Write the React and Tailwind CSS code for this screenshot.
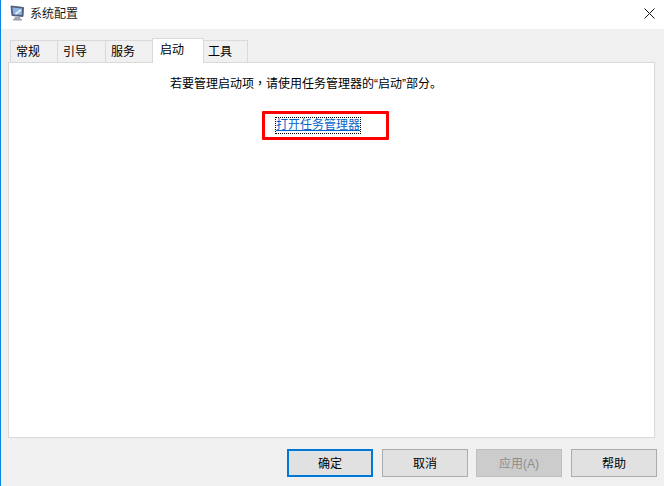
const font = { fontFamily: '"Liberation Sans", "Noto Sans CJK SC", sans-serif' };

function AppIcon() {
  return (
    <svg width="16" height="16" viewBox="0 0 16 16" className="shrink-0">
      <path d="M1 1 L13.5 2.5 L13 11.5 L2 10.5 Z" fill="#59637f" stroke="#3d4a6b" strokeWidth="0.8" />
      <path d="M2.5 2.5 L12 3.6 L11.7 10 L3.2 9.3 Z" fill="#8db4e8" />
      <path d="M4.5 9 L10 4.2 L11.5 5.5 L6.5 9.4 Z" fill="#e8f1fb" />
      <path d="M5 11.5 L10 12 L11 14.5 L4 14.2 Z" fill="#a4a8b0" />
      <path d="M3 14.8 L12 15" stroke="#777c88" strokeWidth="1.1" />
    </svg>
  );
}

function Tab({ label, active, width }) {
  if (active) {
    return (
      <div className={`${width} h-[25px] -mx-px relative z-10 -mb-px bg-white border border-b-0 border-[#d9d9d9] pl-[7px] pt-[2px] text-[12px] leading-[18px] text-black`}>
        {label}
      </div>
    );
  }
  return (
    <div className={`${width} h-[22px] bg-[#f0f0f0] border border-b-0 border-l-0 first:border-l border-[#d9d9d9] pl-[5px] pt-[2px] text-[12px] leading-[18px] text-black`}>
      {label}
    </div>
  );
}

function Button({ label, variant }) {
  const styles = {
    primary: "border-2 border-[#0078d7] bg-[#e1e1e1] text-black",
    normal: "border border-[#adadad] bg-[#e1e1e1] text-black",
    disabled: "border border-[#bfbfbf] bg-[#cccccc] text-[#8c8c8c]",
  };
  return (
    <div className={`w-[86px] h-[28px] flex items-center justify-center pt-[1px] text-[12px] ${styles[variant]}`}>
      {label}
    </div>
  );
}

export default function App() {
  return (
    <div style={font} className="w-[664px] h-[486px] overflow-hidden flex flex-col bg-[#f0f0f0] border-l border-[#0a84e3]">
      <div className="h-[29px] shrink-0 bg-white flex items-center pl-[9px] pr-[9px] pb-[3px]">
        <AppIcon />
        <span className="ml-[4px] pt-[1px] text-[12px] text-[#1a1a1a]">系统配置</span>
        <svg width="11" height="11" viewBox="0 0 11 11" className="ml-auto">
          <path d="M0.5 0.5 L10.5 10.5 M10.5 0.5 L0.5 10.5" stroke="#111" strokeWidth="1" fill="none" />
        </svg>
      </div>

      <div className="flex-1 flex flex-col pl-[7px] pr-[9px] pt-[9px]">
        <div className="h-[24px] shrink-0 flex items-end pl-[2px]">
          <Tab label="常规" width="w-[48px]" />
          <Tab label="引导" width="w-[48px]" />
          <Tab label="服务" width="w-[47px]" />
          <Tab label="启动" width="w-[52px]" active />
          <Tab label="工具" width="w-[45px]" />
        </div>

        <div className="h-[376px] shrink-0 bg-white border border-[#d9d9d9] pt-[11px] pl-[161px]">
          <p className="text-[12px] leading-[18px] text-black">
            若要管理启动项<span className="font-['Noto_Sans_CJK_TC']">，</span>请使用任务管理器的“启动”部分。
          </p>
          <div className="mt-[18px] ml-[92px] w-[127px] h-[29px] rounded-[1px] border-[3px] border-[#ff0000] pl-[11px] pt-[4px]">
            <a className="block w-[84px] text-[12px] leading-[15px] text-[#0066cc] underline outline-1 outline-dotted outline-black">
              打开任务管理器
            </a>
          </div>
        </div>

        <div className="mt-[11px] flex justify-end -mr-[2px]">
          <Button label="确定" variant="primary" />
          <div className="ml-[9px]"><Button label="取消" variant="normal" /></div>
          <div className="ml-[8px]"><Button label="应用(A)" variant="disabled" /></div>
          <div className="ml-[9px]"><Button label="帮助" variant="normal" /></div>
        </div>
      </div>
    </div>
  );
}
